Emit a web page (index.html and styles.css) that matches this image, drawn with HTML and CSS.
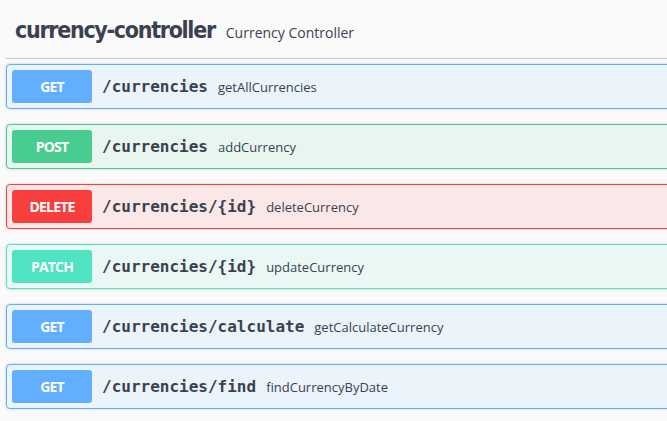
FILE: index.html
```html
<!DOCTYPE html>
<html>
<head>
<meta charset="utf-8">
<link rel="stylesheet" href="styles.css">
</head>
<body>
<div class="page">
  <div class="tag">
    <span class="tag-name">currency-controller</span>
    <span class="tag-desc">Currency Controller</span>
  </div>
  <div class="op get">
    <span class="method">GET</span>
    <span class="path">/currencies</span>
    <span class="desc">getAllCurrencies</span>
  </div>
  <div class="op post">
    <span class="method">POST</span>
    <span class="path">/currencies</span>
    <span class="desc">addCurrency</span>
  </div>
  <div class="op delete">
    <span class="method">DELETE</span>
    <span class="path">/currencies/{id}</span>
    <span class="desc">deleteCurrency</span>
  </div>
  <div class="op patch">
    <span class="method">PATCH</span>
    <span class="path">/currencies/{id}</span>
    <span class="desc">updateCurrency</span>
  </div>
  <div class="op get">
    <span class="method">GET</span>
    <span class="path">/currencies/calculate</span>
    <span class="desc">getCalculateCurrency</span>
  </div>
  <div class="op get">
    <span class="method">GET</span>
    <span class="path">/currencies/find</span>
    <span class="desc">findCurrencyByDate</span>
  </div>
</div>
</body>
</html>
```
FILE: styles.css
```css
html, body {
  margin: 0;
  padding: 0;
  background: #fafafa;
  overflow: hidden;
}
.page {
  width: 720px;
  padding-left: 6px;
  color: #3b4151;
}
.tag {
  display: flex;
  align-items: baseline;
  height: 59px;
  box-sizing: border-box;
  padding: 17px 0 0 9px;
  border-bottom: 1px solid #c4c5ca;
  margin-bottom: 5px;
}
.tag-name {
  font-family: "DejaVu Sans Condensed", "DejaVu Sans", sans-serif;
  font-stretch: condensed;
  font-weight: bold;
  font-size: 23px;
  letter-spacing: -1.3px;
  color: #3b4151;
}
.tag-desc {
  font-family: "Open Sans", sans-serif;
  font-size: 14px;
  margin-left: 11px;
}
.op {
  display: flex;
  align-items: center;
  height: 45px;
  box-sizing: border-box;
  padding: 0 5px;
  border: 1px solid;
  border-radius: 4px;
  box-shadow: 0 0 3px rgba(0,0,0,.19);
  margin-bottom: 15px;
}
.method {
  width: 80px;
  height: 33px;
  display: flex;
  align-items: center;
  justify-content: center;
  border-radius: 3px;
  color: #fff;
  font-family: "Open Sans", sans-serif;
  font-weight: bold;
  font-size: 14px;
  letter-spacing: -0.8px;
}
.path {
  padding: 0 10px;
  font-family: "DejaVu Sans Mono", monospace;
  font-weight: bold;
  font-size: 16px;
  color: #3b4151;
}
.desc {
  font-family: "Open Sans", sans-serif;
  font-size: 13px;
  color: #3b4151;
}
.get { border-color: #61affe; background: #ebf3fb; }
.get .method { background: #61affe; }
.post { border-color: #49cc90; background: #e8f6f0; }
.post .method { background: #49cc90; }
.delete { border-color: #f93e3e; background: #fae7e7; }
.delete .method { background: #f93e3e; }
.patch { border-color: #50e3c2; background: #e9f8f5; }
.patch .method { background: #50e3c2; }
```
